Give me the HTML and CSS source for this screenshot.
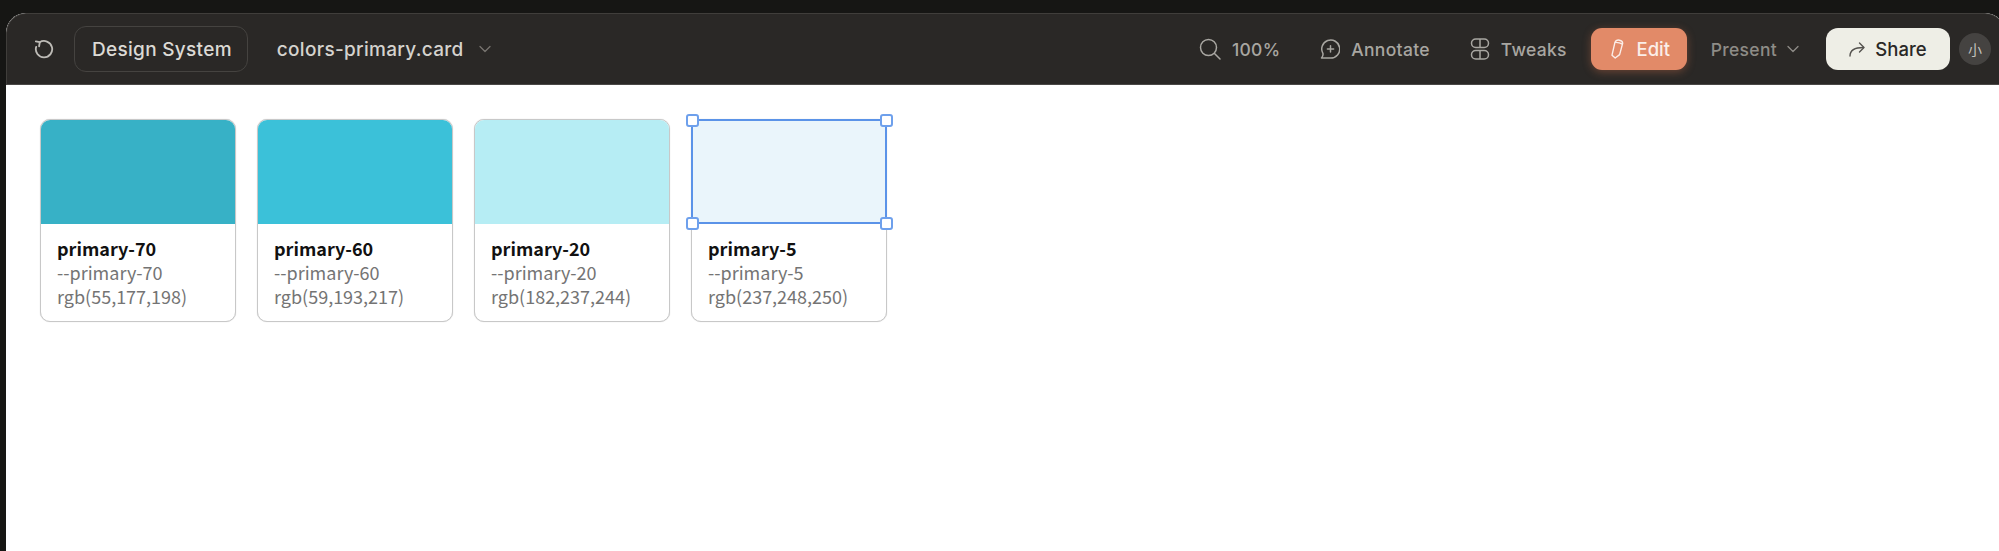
FILE: index.html
```html
<!DOCTYPE html>
<html lang="en">

<head>
    <meta charset="UTF-8">
    <meta name="viewport" content="width=device-width, initial-scale=1.0">
    <title>colors-primary.card</title>
    <link rel="stylesheet" href="styles.css">
</head>

<body>

    <div class="window">
        <header class="toolbar">
            <div class="toolbar-left">
                <svg class="icon-reload" width="20" height="20" viewBox="0 0 22 22" fill="none" stroke="#bdbbb6" stroke-width="2" stroke-linecap="round" stroke-linejoin="round">
                    <path d="M6.2 3.6A9 9 0 1 1 2.4 8.6" />
                    <path d="M2 2.6 6.4 3.4 5.6 8" />
                </svg>
                <div class="project-chip">Design System</div>
                <div class="file-name">colors-primary.card</div>
                <svg class="chevron-file" width="12" height="8" viewBox="0 0 12 8" fill="none" stroke="#77746f" stroke-width="1.3" stroke-linecap="round" stroke-linejoin="round">
                    <path d="M1 1.5 6 6.5 11 1.5" />
                </svg>
            </div>

            <div class="toolbar-right">
                <div class="tool">
                    <svg width="22" height="22" viewBox="0 0 22 22" fill="none" stroke="#a8a6a1" stroke-width="1.5" stroke-linecap="round">
                        <circle cx="9.5" cy="9.5" r="8" />
                        <path d="M15.5 15.5 21 21" />
                    </svg>
                    <span>100%</span>
                </div>
                <div class="tool">
                    <svg width="20" height="20" viewBox="0 0 20 20" fill="none" stroke="#a8a6a1" stroke-width="1.5" stroke-linecap="round" stroke-linejoin="round">
                        <path d="M3 14.6A9 9 0 1 1 10.5 19H1.5C2.6 17.8 3.2 16.4 3 14.6Z" />
                        <path d="M10.5 6.8V13M7.4 9.9H13.6" />
                    </svg>
                    <span>Annotate</span>
                </div>
                <div class="tool">
                    <svg width="20" height="22" viewBox="0 0 20 22" fill="none" stroke="#a8a6a1" stroke-width="1.5">
                        <rect x="1.5" y="1" width="17" height="8.5" rx="4.25" />
                        <rect x="1.5" y="12.5" width="17" height="8.5" rx="4.25" />
                        <path d="M10 1V9.5M10 12.5V21" />
                    </svg>
                    <span>Tweaks</span>
                </div>
                <div class="edit-button">
                    <svg width="14" height="20" viewBox="0 0 14 20" fill="none" stroke="#fbeee8" stroke-width="1.4" stroke-linejoin="round">
                        <path d="M5 3.2C5.6 1.4 7.2 0.8 9.4 1.2 11.6 1.6 12.8 2.8 12.6 4.6L9.6 15.6 5.2 19 2 16.2Z" />
                        <path d="M5 3.4C7.4 3.2 10.2 3.8 12.4 5.2" />
                    </svg>
                    <span>Edit</span>
                </div>
                <div class="present">
                    <span>Present</span>
                    <svg width="12" height="8" viewBox="0 0 12 8" fill="none" stroke="#8e8c87" stroke-width="1.3" stroke-linecap="round" stroke-linejoin="round">
                        <path d="M1 1.5 6 6.5 11 1.5" />
                    </svg>
                </div>
                <div class="share-button">
                    <svg width="16" height="15" viewBox="0 0 16 15" fill="none" stroke="#55534f" stroke-width="1.4" stroke-linecap="round" stroke-linejoin="round">
                        <path d="M1 14C1 9 4 5.5 14.5 5.5" />
                        <path d="M10.5 1 15 5.5 10.5 10" />
                    </svg>
                    <span>Share</span>
                </div>
                <div class="avatar">小</div>
            </div>
        </header>

        <main class="canvas">
            <div class="card">
                <div class="swatch swatch-70"></div>
                <div class="card-info">
                    <div class="card-name">primary-70</div>
                    <div>--primary-70</div>
                    <div>rgb(55,177,198)</div>
                </div>
            </div>
            <div class="card">
                <div class="swatch swatch-60"></div>
                <div class="card-info">
                    <div class="card-name">primary-60</div>
                    <div>--primary-60</div>
                    <div>rgb(59,193,217)</div>
                </div>
            </div>
            <div class="card">
                <div class="swatch swatch-20"></div>
                <div class="card-info">
                    <div class="card-name">primary-20</div>
                    <div>--primary-20</div>
                    <div>rgb(182,237,244)</div>
                </div>
            </div>
            <div class="card">
                <div class="swatch swatch-5"></div>
                <div class="card-info">
                    <div class="card-name">primary-5</div>
                    <div>--primary-5</div>
                    <div>rgb(237,248,250)</div>
                </div>
                <div class="selection">
                    <span class="handle handle-tl"></span>
                    <span class="handle handle-tr"></span>
                    <span class="handle handle-bl"></span>
                    <span class="handle handle-br"></span>
                </div>
            </div>
        </main>
    </div>

</body>

</html>
```

FILE: styles.css
```css
html,
body {
    height: 100%;
}

body {
    margin: 0;
    padding: 13px 0 0 6px;
    box-sizing: border-box;
    background: #161614;
    overflow: hidden;
    font-family: Inter, "Liberation Sans", sans-serif;
}

.window {
    width: 1999px;
    height: 538px;
    display: flex;
    flex-direction: column;
    border-radius: 20px 20px 0 0;
    background: #fff;
    overflow: hidden;
}

.toolbar {
    height: 72px;
    box-sizing: border-box;
    display: flex;
    justify-content: space-between;
    align-items: center;
    padding: 0 14px 0 27px;
    background: #2a2826;
    border-top: 1px solid #403e3b;
    border-left: 1px solid #403e3b;
    border-bottom: 1px solid #4a4846;
    border-radius: 20px 20px 0 0;
}

.toolbar-left,
.toolbar-right {
    display: flex;
    align-items: center;
}

.project-chip {
    height: 46px;
    box-sizing: border-box;
    display: flex;
    align-items: center;
    margin-left: 20px;
    padding: 0 15px 0 17px;
    border: 1px solid #454340;
    border-radius: 12px;
    color: #dcdad5;
    font-size: 19px;
    font-weight: 500;
    letter-spacing: 0.3px;
}

.file-name {
    margin-left: 29px;
    color: #d5d3ce;
    font-size: 19px;
    font-weight: 500;
    letter-spacing: 0.3px;
}

.chevron-file {
    margin-left: 15px;
}

.tool {
    display: flex;
    align-items: center;
    gap: 11px;
    padding: 0 20px;
    color: #a8a6a1;
    font-size: 17.5px;
    font-weight: 500;
    letter-spacing: 0.3px;
}

.edit-button {
    width: 96px;
    height: 42px;
    box-sizing: border-box;
    display: flex;
    align-items: center;
    justify-content: center;
    gap: 12px;
    margin-left: 4px;
    padding-left: 3px;
    background: #e28a68;
    border-radius: 11px;
    box-shadow: 0 2px 8px rgba(226, 120, 80, 0.35);
    color: #fbeee8;
    font-size: 18.5px;
    font-weight: 500;
}

.present {
    display: flex;
    align-items: center;
    gap: 10px;
    margin-left: 24px;
    color: #8e8c87;
    font-size: 17.5px;
    font-weight: 500;
    letter-spacing: 0.3px;
}

.share-button {
    width: 124px;
    height: 42px;
    box-sizing: border-box;
    display: flex;
    align-items: center;
    justify-content: center;
    gap: 10px;
    margin-left: 27px;
    background: #eeeee6;
    border-radius: 12px;
    color: #2a2826;
    font-size: 18.5px;
    font-weight: 500;
}

.avatar {
    width: 32px;
    height: 32px;
    display: flex;
    align-items: center;
    justify-content: center;
    margin-left: 9px;
    background: #454341;
    border-radius: 50%;
    color: #c4c2be;
    font-family: "Noto Sans CJK SC", sans-serif;
    font-size: 14px;
}

.canvas {
    flex: 1;
    display: flex;
    align-items: flex-start;
    gap: 21px;
    padding: 34px 0 0 34px;
    background: #fff;
}

.card {
    position: relative;
    width: 196px;
    height: 203px;
    box-sizing: border-box;
    border: 1px solid #c8c8c8;
    border-radius: 10px;
    box-shadow: 0 0 1px #c8c8c8;
    background: #fff;
    font-family: "Noto Sans CJK SC", "Noto Sans", sans-serif;
}

.swatch {
    height: 103.5px;
    border-radius: 9px 9px 0 0;
}

.swatch-70 {
    background: #37b1c6;
}

.swatch-60 {
    background: #3bc1d9;
}

.swatch-20 {
    background: #b6edf4;
}

.swatch-5 {
    background: #eaf5fb;
}

.card-info {
    padding: 12px 16px 0;
    color: #747474;
    font-size: 18px;
    line-height: 24px;
}

.card-name {
    color: #111;
    font-weight: 700;
}

.selection {
    position: absolute;
    top: -1px;
    left: -1px;
    right: -1px;
    height: 105px;
    box-sizing: border-box;
    border: 2px solid #5b93e8;
}

.handle {
    position: absolute;
    width: 13px;
    height: 13px;
    box-sizing: border-box;
    background: #fff;
    border: 2px solid #6ea0ec;
    border-radius: 3px;
}

.handle-tl {
    top: -7.5px;
    left: -7.5px;
}

.handle-tr {
    top: -7.5px;
    right: -7.5px;
}

.handle-bl {
    bottom: -7.5px;
    left: -7.5px;
}

.handle-br {
    bottom: -7.5px;
    right: -7.5px;
}
```
